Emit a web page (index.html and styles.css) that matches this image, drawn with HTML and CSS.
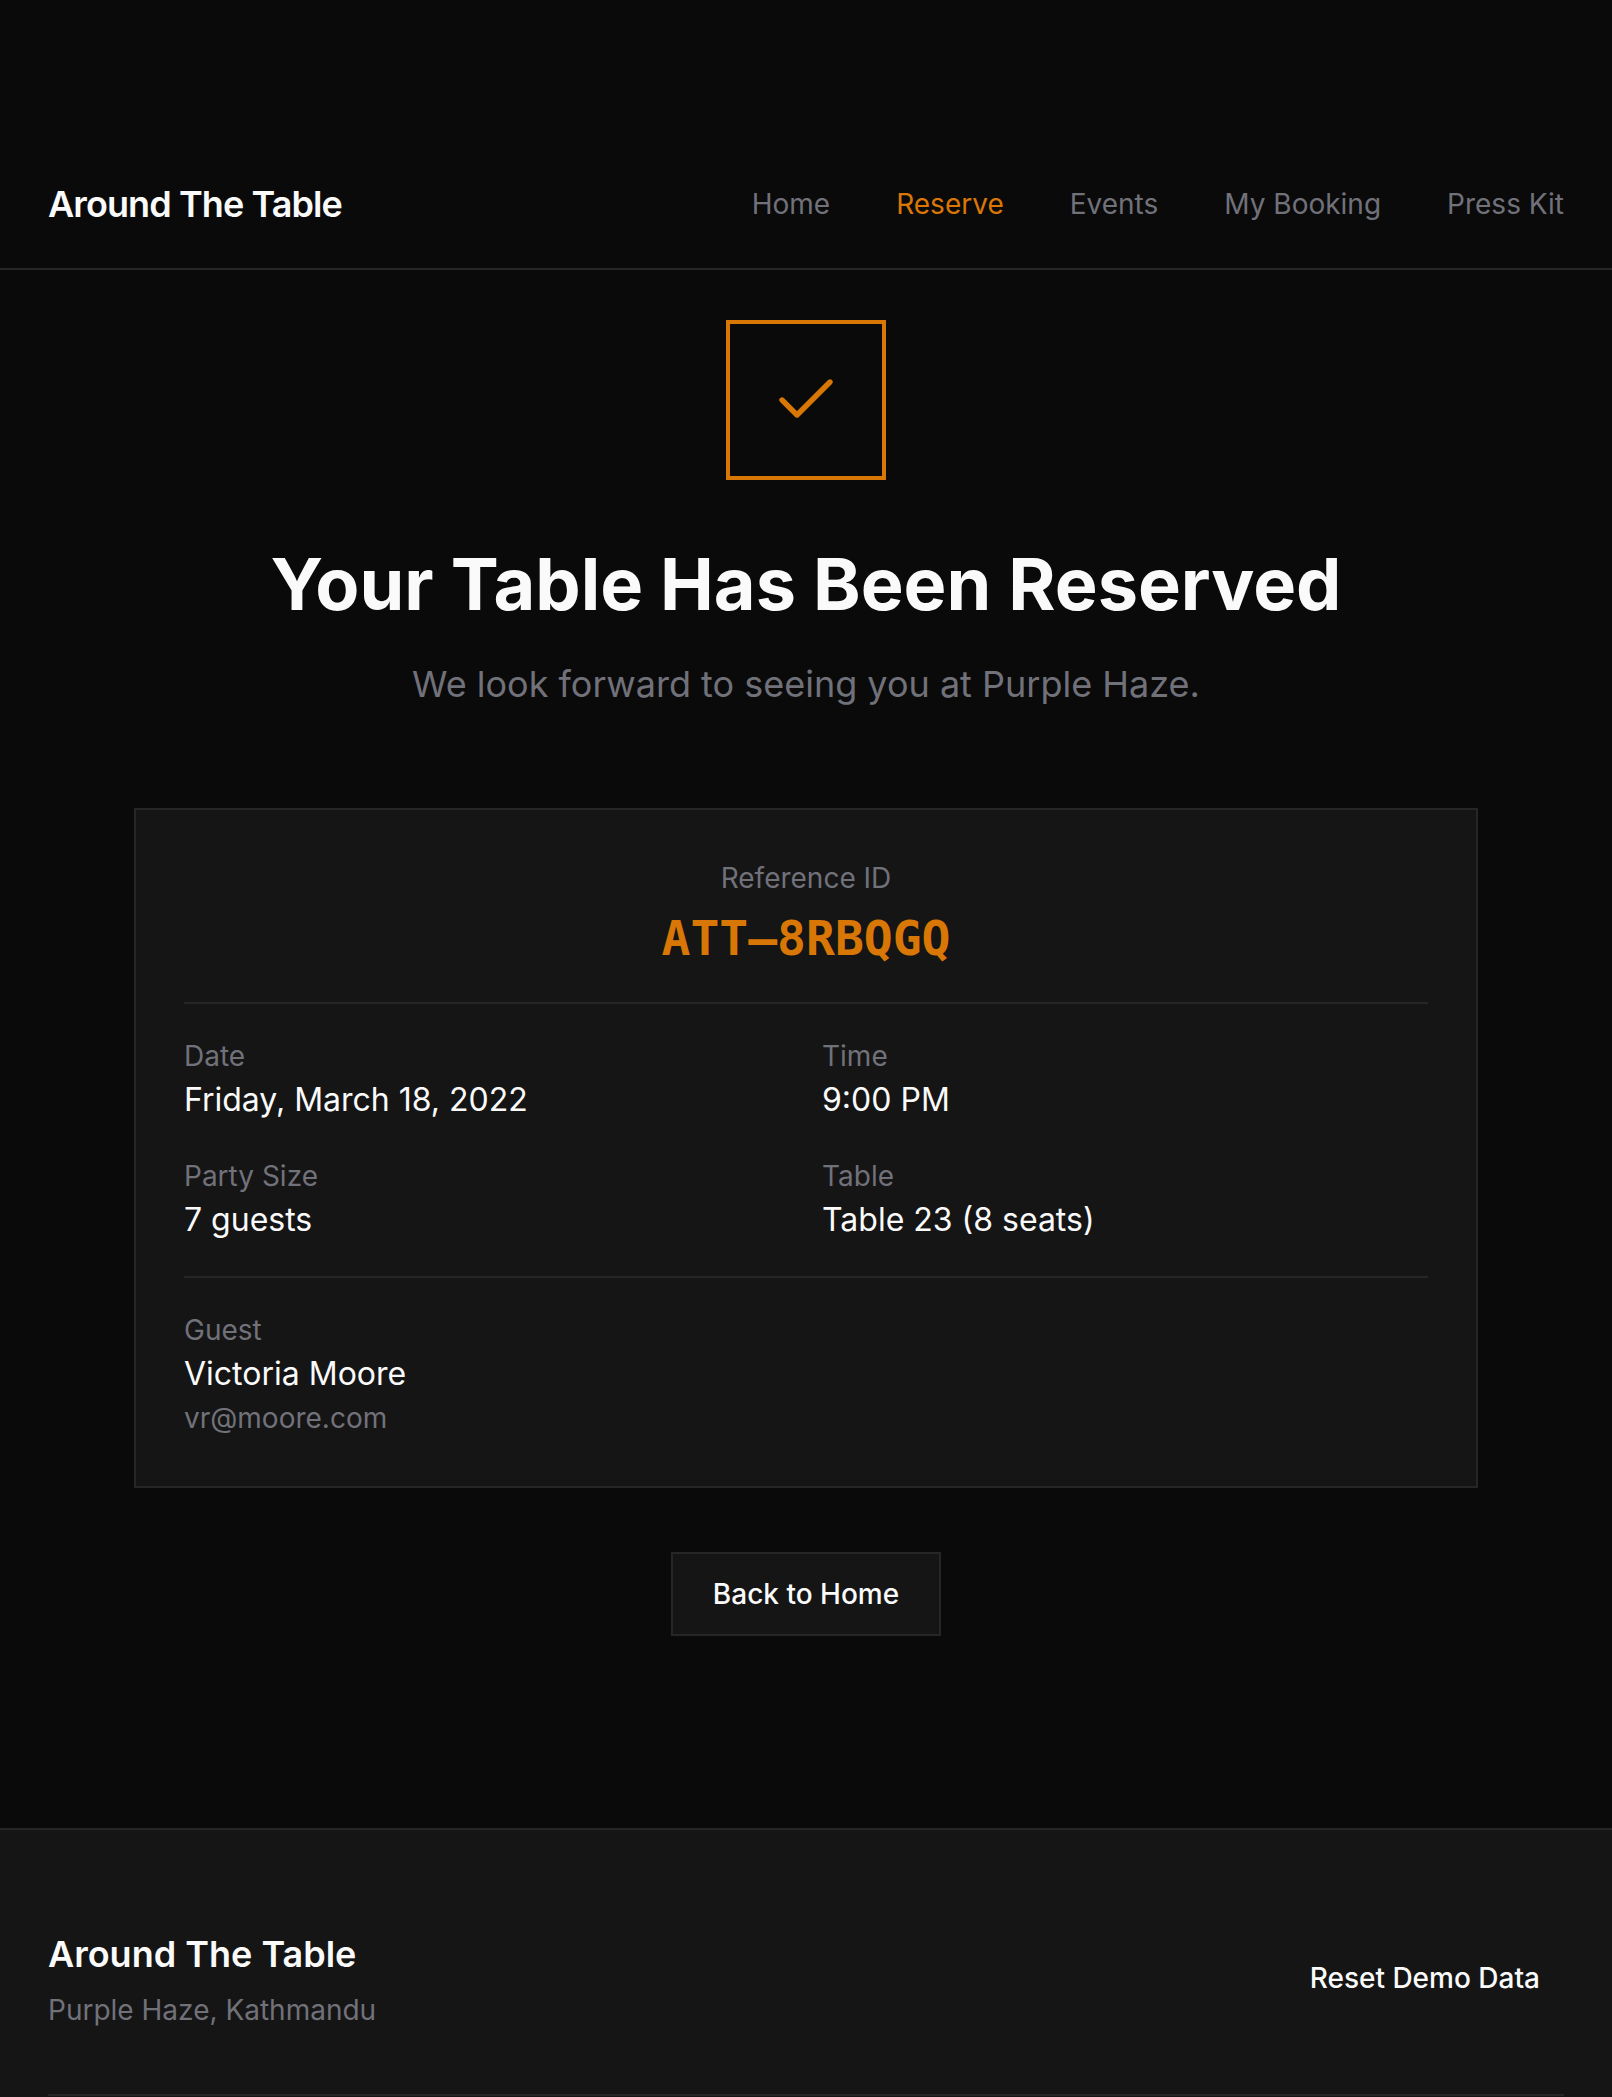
FILE: index.html
```html
<!DOCTYPE html>
<html lang="en">
<head>
<meta charset="utf-8">
<title>Reservation Confirmed — Around The Table</title>
<link rel="stylesheet" href="styles.css">
</head>
<body>
<header class="site-header">
  <div class="header-inner">
    <a class="logo" href="#">Around The Table</a>
    <nav class="nav">
      <a class="nav-link" href="#">Home</a>
      <a class="nav-link active" href="#">Reserve</a>
      <a class="nav-link" href="#">Events</a>
      <a class="nav-link" href="#">My Booking</a>
      <a class="nav-link" href="#">Press Kit</a>
    </nav>
  </div>
</header>

<main class="main">
  <div class="check-box">
    <svg class="check-icon" viewBox="0 0 24 24" fill="none" stroke="currentColor" stroke-width="1.8" stroke-linecap="round" stroke-linejoin="round">
      <path d="M20 6 9 17l-5-5"/>
    </svg>
  </div>
  <h1 class="title">Your Table Has Been Reserved</h1>
  <p class="subtitle">We look forward to seeing you at Purple Haze.</p>

  <section class="card">
    <div class="ref">
      <div class="label">Reference ID</div>
      <div class="ref-id">ATT–8RBQGQ</div>
    </div>
    <div class="details">
      <div class="item">
        <div class="label">Date</div>
        <div class="value">Friday, March 18, 2022</div>
      </div>
      <div class="item">
        <div class="label">Time</div>
        <div class="value">9:00 PM</div>
      </div>
      <div class="item">
        <div class="label">Party Size</div>
        <div class="value">7 guests</div>
      </div>
      <div class="item">
        <div class="label">Table</div>
        <div class="value">Table 23 (8 seats)</div>
      </div>
    </div>
    <div class="guest">
      <div class="label">Guest</div>
      <div class="value">Victoria Moore</div>
      <div class="email">vr@moore.com</div>
    </div>
  </section>

  <a class="btn" href="#">Back to Home</a>
</main>

<footer class="footer">
  <div class="footer-inner">
    <div class="footer-top">
      <div class="footer-brand">
        <div class="footer-logo">Around The Table</div>
        <div class="footer-sub">Purple Haze, Kathmandu</div>
      </div>
      <button class="reset" type="button">Reset Demo Data</button>
    </div>
    <div class="footer-bottom"></div>
  </div>
</footer>
</body>
</html>
```

FILE: styles.css
```css
* {
  box-sizing: border-box;
  margin: 0;
  padding: 0;
}

html,
body {
  background: #0a0a0a;
}

body {
  color: #fafafa;
  font-family: Inter, "Noto Sans", "Liberation Sans", sans-serif;
  -webkit-font-smoothing: antialiased;
}

a {
  color: inherit;
  text-decoration: none;
}

/* Header */
.site-header {
  padding-top: 140px;
  border-bottom: 2px solid #262626;
}

.header-inner {
  height: 128px;
  padding: 0 48px;
  display: flex;
  align-items: center;
  justify-content: space-between;
}

.logo {
  font-size: 36px;
  line-height: 56px;
  font-weight: 600;
  letter-spacing: -0.025em;
  color: #fafafa;
}

.nav {
  display: flex;
  gap: 66px;
}

.nav-link {
  font-size: 28px;
  line-height: 40px;
  color: #71717a;
}

.nav-link.active {
  color: #d97706;
}

/* Main */
.main {
  padding: 50px 48px 192px;
  display: flex;
  flex-direction: column;
  align-items: center;
}

.check-box {
  width: 160px;
  height: 160px;
  border: 4px solid #d97706;
  display: flex;
  align-items: center;
  justify-content: center;
  color: #d97706;
  margin-bottom: 64px;
}

.check-icon {
  width: 72px;
  height: 72px;
}

.title {
  font-size: 72px;
  line-height: 80px;
  font-weight: 700;
  text-align: center;
}

.subtitle {
  margin-top: 32px;
  font-size: 36px;
  line-height: 56px;
  color: #71717a;
  text-align: center;
}

.card {
  margin-top: 96px;
  width: 100%;
  max-width: 1344px;
  background: #151515;
  border: 2px solid #262626;
  padding: 48px;
}

.ref {
  text-align: center;
  padding-bottom: 32px;
  border-bottom: 2px solid #262626;
}

.label {
  font-size: 28px;
  line-height: 40px;
  color: #71717a;
}

.ref-id {
  margin-top: 8px;
  font-family: "DejaVu Sans Mono", "Liberation Mono", monospace;
  font-size: 48px;
  line-height: 64px;
  font-weight: 700;
  color: #d97706;
}

.details {
  display: grid;
  grid-template-columns: 1fr 1fr;
  gap: 32px;
  padding: 32px 0;
  border-bottom: 2px solid #262626;
}

.value {
  font-size: 32px;
  line-height: 48px;
  color: #fafafa;
}

.guest {
  padding-top: 32px;
}

.email {
  font-size: 28px;
  line-height: 40px;
  color: #71717a;
}

.btn {
  margin-top: 64px;
  display: inline-block;
  padding: 20px 40px;
  font-size: 28px;
  line-height: 40px;
  font-weight: 500;
  color: #fafafa;
  background: #151515;
  border: 2px solid #262626;
}

/* Footer */
.footer {
  background: #151515;
  border-top: 2px solid #262626;
}

.footer-inner {
  padding: 96px 48px 0;
}

.footer-top {
  display: flex;
  align-items: center;
  justify-content: space-between;
}

.footer-logo {
  font-size: 36px;
  line-height: 56px;
  font-weight: 600;
}

.footer-sub {
  margin-top: 8px;
  font-size: 28px;
  line-height: 40px;
  color: #71717a;
}

.reset {
  font-family: inherit;
  font-size: 28px;
  line-height: 40px;
  font-weight: 500;
  color: #fafafa;
  background: transparent;
  border: none;
  padding: 8px 24px;
  cursor: pointer;
}

.footer-bottom {
  margin-top: 64px;
  border-top: 2px solid #262626;
  height: 40px;
}
```
